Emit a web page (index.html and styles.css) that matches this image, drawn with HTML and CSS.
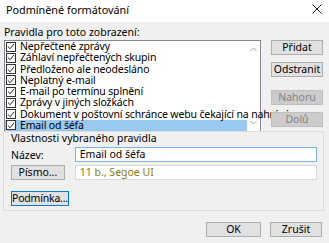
FILE: index.html
```html
<!DOCTYPE html>
<html lang="cs">
<head>
<meta charset="utf-8">
<link rel="stylesheet" href="styles.css">
</head>
<body>
<div class="window">
  <div class="titlebar">
    <span class="title">Podmíněné formátování</span>
    <svg class="close" width="10" height="10" viewBox="0 0 10 10"><path d="M0.5 0.5L9.5 9.5M9.5 0.5L0.5 9.5" stroke="#1a1a1a" stroke-width="1"/></svg>
  </div>
  <div class="content">
    <div class="rules">
      <div class="rules-label">Pravidla pro toto zobrazení:</div>
      <div class="rules-row">
        <div class="listbox">
          <ul class="items">
            <li class="item"><span class="cb"><svg width="9" height="9" viewBox="0 0 9 9"><path d="M1 4.5L3.5 7L8 1.5" fill="none" stroke="#222" stroke-width="1.1"/></svg></span>Nepřečtené zprávy</li>
            <li class="item"><span class="cb"><svg width="9" height="9" viewBox="0 0 9 9"><path d="M1 4.5L3.5 7L8 1.5" fill="none" stroke="#222" stroke-width="1.1"/></svg></span>Záhlaví nepřečtených skupin</li>
            <li class="item"><span class="cb"><svg width="9" height="9" viewBox="0 0 9 9"><path d="M1 4.5L3.5 7L8 1.5" fill="none" stroke="#222" stroke-width="1.1"/></svg></span>Předloženo ale neodesláno</li>
            <li class="item"><span class="cb"><svg width="9" height="9" viewBox="0 0 9 9"><path d="M1 4.5L3.5 7L8 1.5" fill="none" stroke="#222" stroke-width="1.1"/></svg></span>Neplatný e-mail</li>
            <li class="item"><span class="cb"><svg width="9" height="9" viewBox="0 0 9 9"><path d="M1 4.5L3.5 7L8 1.5" fill="none" stroke="#222" stroke-width="1.1"/></svg></span>E-mail po termínu splnění</li>
            <li class="item"><span class="cb"><svg width="9" height="9" viewBox="0 0 9 9"><path d="M1 4.5L3.5 7L8 1.5" fill="none" stroke="#222" stroke-width="1.1"/></svg></span>Zprávy v jiných složkách</li>
            <li class="item"><span class="cb"><svg width="9" height="9" viewBox="0 0 9 9"><path d="M1 4.5L3.5 7L8 1.5" fill="none" stroke="#222" stroke-width="1.1"/></svg></span>Dokument v poštovní schránce webu čekající na nahrání</li>
            <li class="item selected"><span class="cb"><svg width="9" height="9" viewBox="0 0 9 9"><path d="M1 4.5L3.5 7L8 1.5" fill="none" stroke="#222" stroke-width="1.1"/></svg></span>Email od šéfa</li>
          </ul>
          <div class="scrollbar">
            <svg width="7" height="5" viewBox="0 0 7 5"><path d="M0.5 4L3.5 1L6.5 4" fill="none" stroke="#a6a6a6" stroke-width="1"/></svg>
            <svg width="7" height="5" viewBox="0 0 7 5"><path d="M0.5 1L3.5 4L6.5 1" fill="none" stroke="#a6a6a6" stroke-width="1"/></svg>
          </div>
        </div>
        <div class="side-buttons">
          <button class="btn">Přidat</button>
          <button class="btn">Odstranit</button>
          <button class="btn disabled gap-big">Nahoru</button>
          <button class="btn disabled">Dolů</button>
        </div>
      </div>
    </div>
    <div class="group">
      <div class="group-label">Vlastnosti vybraného pravidla</div>
      <div class="field-row">
        <span class="field-label">Název:</span>
        <div class="input focused">Email od šéfa</div>
      </div>
      <div class="field-row second">
        <button class="btn font-btn">Písmo...</button>
        <div class="input readonly">11 b., Segoe UI</div>
      </div>
      <button class="btn cond-btn">Podmínka...</button>
    </div>
    <div class="footer">
      <button class="btn ok-btn">OK</button>
      <button class="btn">Zrušit</button>
    </div>
  </div>
</div>
</body>
</html>
```

FILE: styles.css
```css
* { box-sizing: border-box; }
html, body { margin: 0; padding: 0; }
body {
  width: 329px;
  height: 243px;
  background: #f0f0f0;
  font-family: "Noto Sans", "Open Sans", sans-serif;
  font-size: 10.5px;
  color: #000;
  overflow: hidden;
}
.window { display: flex; flex-direction: column; height: 243px; }
.titlebar {
  height: 22px;
  background: #fff;
  display: flex;
  align-items: center;
  justify-content: space-between;
  padding: 0 7px 2px 6px;
}
.title { font-size: 10.8px; line-height: 14px; }
.close { display: block; margin-top: -3px; }
.content { padding: 3px 5px 0 4px; display: flex; flex-direction: column; }
.rules-label { line-height: 14px; height: 14px; }
.rules-row { display: flex; gap: 10px; margin-top: 1px; }
.listbox {
  width: 257px;
  height: 92px;
  background: #fff;
  border: 1px solid #828790;
  display: flex;
}
.items { list-style: none; margin: 0; padding: 0; flex: 1; min-width: 0; }
.item {
  height: 11.25px;
  line-height: 11px;
  display: flex;
  align-items: center;
  white-space: nowrap;
  letter-spacing: -0.15px;
}
.item.selected { background: #99c9ef; }
.cb {
  width: 10px;
  height: 10px;
  border: 1px solid #333;
  background: #fff;
  margin: 0 4px 0 1px;
  display: flex;
  align-items: center;
  justify-content: center;
  flex: none;
}
.cb svg { display: block; }
.scrollbar {
  width: 13px;
  flex: none;
  display: flex;
  flex-direction: column;
  justify-content: space-between;
  align-items: center;
  padding: 6px 0 6px;
}
.scrollbar svg { display: block; }
.side-buttons { display: flex; flex-direction: column; width: 52px; }
.btn {
  font: inherit;
  font-size: 10.5px;
  height: 15px;
  padding: 0 0 1px;
  background: #e1e1e1;
  border: 1px solid #adadad;
  color: #000;
  border-radius: 0;
  width: 52px;
  display: flex;
  align-items: center;
  justify-content: center;
  line-height: 12px;
  white-space: nowrap;
}
.side-buttons .btn + .btn { margin-top: 7px; }
.side-buttons .btn.gap-big { margin-top: 13px; }
.btn.disabled { background: #cccccc; border-color: #bfbfbf; color: #838383; }
.group {
  margin-left: -1px;
  margin-top: -1px;
  width: 321px;
  height: 80px;
  border: 1px solid #dcdcdc;
  padding: 0 6px 0 7px;
}
.group-label { line-height: 12px; height: 12px; }
.field-row { display: flex; align-items: center; margin-top: 3px; }
.field-row.second { margin-top: 3px; }
.field-label { width: 64px; }
.input {
  width: 243px;
  height: 15px;
  border: 1px solid #7eb4ea;
  background: #fff;
  padding: 0 4px;
  line-height: 13px;
  white-space: nowrap;
}
.input.readonly { border-color: #d9d9d9; color: #8a7e10; }
.font-btn { width: 54px; margin-right: 10px; }
.cond-btn { width: 58px; margin-top: 11px; border-color: #0078d7; letter-spacing: -0.2px; }
.footer { display: flex; justify-content: flex-end; gap: 9px; margin-top: 11px; padding-right: 2px; }
.footer .ok-btn { width: 55px; }
```
